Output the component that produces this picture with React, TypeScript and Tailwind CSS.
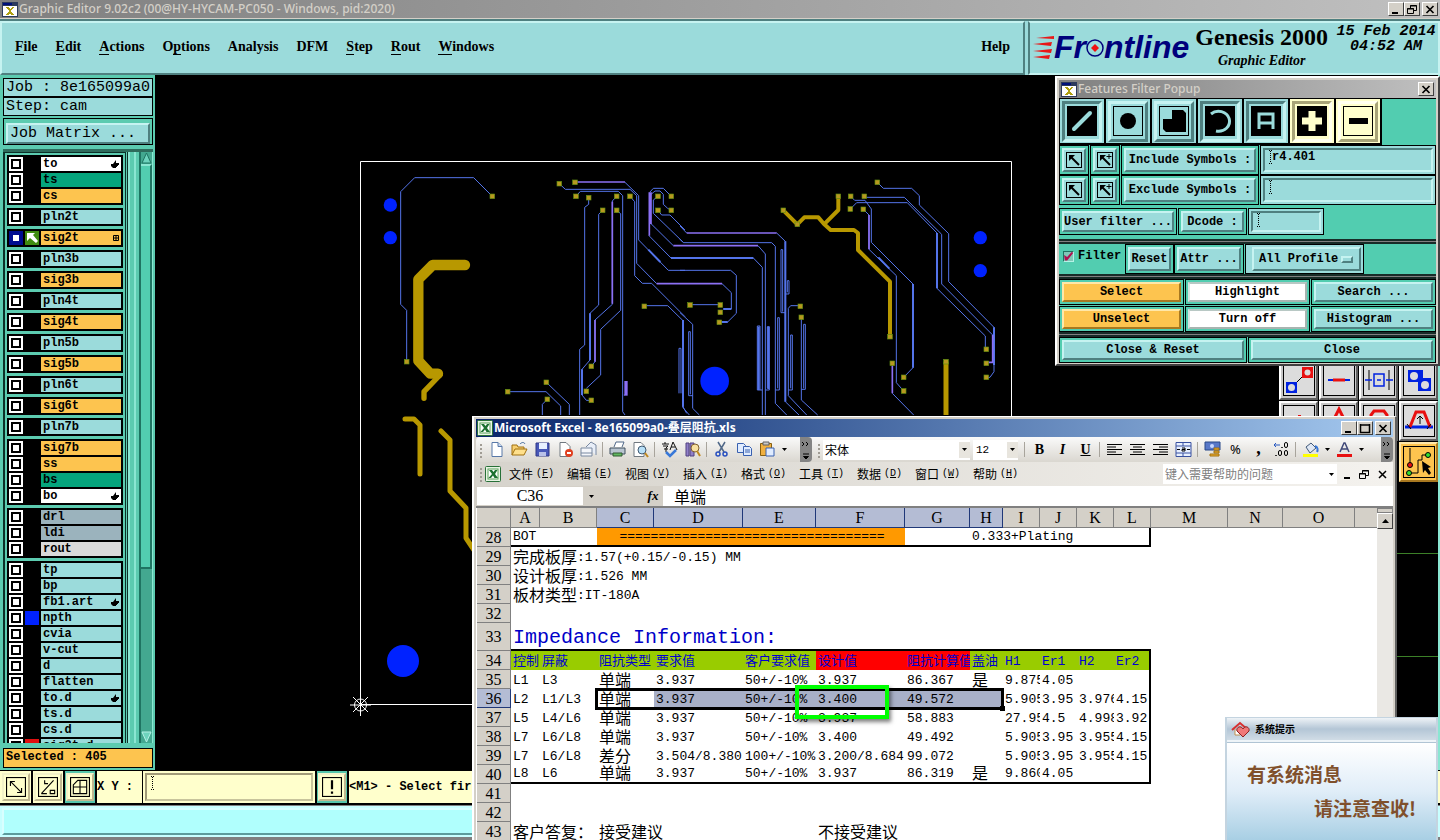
import React from 'react';

const MONO = 'font-["Liberation_Mono","Noto_Sans_CJK_SC",monospace]';
const SERIF = 'font-["Liberation_Serif","Noto_Sans_CJK_SC",serif]';
const SANS = 'font-["Noto_Sans","Noto_Sans_CJK_SC",sans-serif]';
const CJK = 'font-["Noto_Sans_CJK_SC",sans-serif]';

// bevel helpers shared by all the Motif style widgets
const RAISED = 'border-2 border-t-[#c6f3f1] border-l-[#c6f3f1] border-b-[#4f8080] border-r-[#4f8080] bg-[#9bdbdb]';
const SUNKEN = 'border-2 border-t-[#4f8080] border-l-[#4f8080] border-b-[#c6f3f1] border-r-[#c6f3f1] bg-[#9bdbdb]';
const GOLD = 'border-2 border-t-[#ffe7a8] border-l-[#ffe7a8] border-b-[#a87820] border-r-[#a87820] bg-[#fdc44f]';
const WHITE = 'border-2 border-t-[#b8c8c4] border-l-[#d8e4e0] border-b-[#a8b4b0] border-r-[#a8b4b0] bg-white';

const menus = [
  { label: 'File', key: 0 },
  { label: 'Edit', key: 0 },
  { label: 'Actions', key: 0 },
  { label: 'Options', key: 1 },
  { label: 'Analysis', key: -1 },
  { label: 'DFM', key: -1 },
  { label: 'Step', key: 0 },
  { label: 'Rout', key: 0 },
  { label: 'Windows', key: 0 },
];

type Layer = { name: string; bg: string; hand?: boolean; swatch?: string; active?: boolean };

const AQUA = 'bg-[#9bdbdb]';
const AMBER = 'bg-[#fdc44f]';
const GREEN = 'bg-[#05a57d]';

const layerGroups: Layer[][] = [
  [
    { name: 'to', bg: 'bg-white', hand: true },
    { name: 'ts', bg: GREEN },
    { name: 'cs', bg: AMBER },
  ],
  [{ name: 'pln2t', bg: AQUA }],
  [{ name: 'sig2t', bg: AMBER, active: true }],
  [{ name: 'pln3b', bg: AQUA }],
  [{ name: 'sig3b', bg: AMBER }],
  [{ name: 'pln4t', bg: AQUA }],
  [{ name: 'sig4t', bg: AMBER }],
  [{ name: 'pln5b', bg: AQUA }],
  [{ name: 'sig5b', bg: AMBER }],
  [{ name: 'pln6t', bg: AQUA }],
  [{ name: 'sig6t', bg: AMBER }],
  [{ name: 'pln7b', bg: AQUA }],
  [
    { name: 'sig7b', bg: AMBER },
    { name: 'ss', bg: AMBER },
    { name: 'bs', bg: GREEN },
    { name: 'bo', bg: 'bg-white', hand: true },
  ],
  [
    { name: 'drl', bg: 'bg-[#9bb3bd]' },
    { name: 'ldi', bg: 'bg-[#9bb3bd]' },
    { name: 'rout', bg: 'bg-[#dadada]' },
  ],
  [
    { name: 'tp', bg: AQUA },
    { name: 'bp', bg: AQUA },
    { name: 'fb1.art', bg: AQUA, hand: true },
    { name: 'npth', bg: AQUA, swatch: 'bg-[#0022ff]' },
    { name: 'cvia', bg: AQUA },
    { name: 'v-cut', bg: AQUA },
    { name: 'd', bg: AQUA },
    { name: 'flatten', bg: AQUA },
    { name: 'to.d', bg: AQUA, hand: true },
    { name: 'ts.d', bg: AQUA },
    { name: 'cs.d', bg: AQUA },
    { name: 'sig2t.d', bg: AQUA, swatch: 'bg-[#e01010]' },
  ],
];

function AppIcon() {
  return (
    <svg className="shrink-0" width="16" height="15" viewBox="0 0 16 15" shapeRendering="crispEdges">
      <rect x="0" y="0" width="16" height="15" fill="#2c3a5c" />
      <rect x="1" y="1" width="9" height="2" fill="#00107c" />
      <rect x="1" y="4" width="14" height="10" fill="#fff" />
      <path d="M4 5h3l1 2 2-2h2l-3 4 3 4h-3l-1-2-2 2H4l3-4z" fill="#b0a010" />
    </svg>
  );
}

function WinButton({ kind }: { kind: 'min' | 'max' | 'restore' | 'close' }) {
  return (
    <button
      aria-label={kind}
      className="flex h-[14px] w-4 items-center justify-center border border-t-white border-l-white border-b-[#404040] border-r-[#404040] bg-[#d4d0c8]"
    >
      <svg width="12" height="11" viewBox="0 0 12 11" fill="none" stroke="#000">
        {kind === 'min' && <path d="M2 9h6" strokeWidth="2" />}
        {kind === 'max' && <path d="M1.5 1v8.500h9V1M1 2h10" strokeWidth="1.500" />}
        {kind === 'restore' && <path d="M4.500 4V1.500h6v5H8M4 2h7M1.500 4.500h6v5h-6zM1 5h7" />}
        {kind === 'close' && <path d="M2.500 2l7 7M9.500 2l-7 7" strokeWidth="1.700" />}
      </svg>
    </button>
  );
}

// the dotted text cursor that every Motif entry shows
function IBeam() {
  return (
    <svg className="shrink-0" width="3" height="14" viewBox="0 0 3 14" fill="none" stroke="#000">
      <path d="M1.500 1v12" strokeDasharray="1 1" />
      <path d="M0 .5h1M2 .5h1M0 13.500h1M2 13.500h1" />
    </svg>
  );
}

function TitleBar() {
  return (
    <header className="flex h-[19px] shrink-0 items-center gap-px border-b border-[#d4d0c8] bg-linear-to-r from-[#808080] to-[#c0c0c0] pr-[2px] pl-[2px]">
      <AppIcon />
      <h1 className={`${SANS} flex-1 text-[12px] leading-4 font-medium whitespace-nowrap text-[#d4d0c8]`}>
        Graphic Editor 9.02c2 (00@HY-HYCAM-PC050 - Windows, pid:2020)
      </h1>
      <div className="flex">
        <WinButton kind="min" />
        <WinButton kind="restore" />
        <span className="w-[2px]" />
        <WinButton kind="close" />
      </div>
    </header>
  );
}

function MenuBar() {
  return (
    <div className={`${SERIF} flex h-14 shrink-0 border-t-2 border-[#4f8080] bg-[#9bdbdb] text-black`}>
      <nav className="flex flex-1 items-center justify-between border-2 border-t-[#c6f3f1] border-l-[#c6f3f1] border-b-[#4f8080] border-r-[#4f8080] px-[13px] pb-[2px] text-[14px] leading-4 font-bold">
        <div className="flex gap-[18px]">
          {menus.map((m) => (
            <button key={m.label}>
              {m.key < 0 ? (
                m.label
              ) : (
                <>
                  {m.label.slice(0, m.key)}
                  <span className="border-b border-black">{m.label[m.key]}</span>
                  {m.label.slice(m.key + 1)}
                </>
              )}
            </button>
          ))}
        </div>
        <button>Help</button>
      </nav>
      <div className="ml-[3px] flex w-[412px] gap-[6px] border-2 border-t-[#c6f3f1] border-l-[#4f8080] border-b-[#c6f3f1] border-r-[#c6f3f1] pl-[2px]">
        <div className='flex items-center pb-[2px] font-["Liberation_Sans",sans-serif] text-[32px] leading-8 font-bold text-[#00007c] italic'>
          <svg className="shrink-0" width="22" height="26" viewBox="0 0 22 26" fill="#e81818">
            <path d="M4 4l18-2v3zM1 10l19-2-1 4zM1 17l19-2-1 4zM1 23l17-2-1 4z" />
          </svg>
          Fr
          <svg className="shrink-0" width="18" height="20" viewBox="0 0 18 20">
            <circle cx="9" cy="11" r="8" fill="none" stroke="#00007c" strokeWidth="1.500" />
            <path d="M9 7l4 4-4 4-4-4z" fill="#f01010" />
          </svg>
          ntline
        </div>
        <div className="flex flex-col items-center">
          <span className="text-[24px] leading-7 font-bold whitespace-nowrap">Genesis 2000</span>
          <span className="text-[14px] leading-5 font-bold italic">Graphic Editor</span>
        </div>
        <time className={`${MONO} flex flex-1 flex-col items-center pt-px text-[15px] leading-[15px] font-bold whitespace-nowrap italic`}>
          <span>15 Feb 2014</span>
          <span>04:52 AM</span>
        </time>
      </div>
    </div>
  );
}

function LayerRow({ layer }: { layer: Layer }) {
  return (
    <li className="flex h-4 items-center gap-[2px] px-[2px]">
      <span className={`flex size-[14px] items-center justify-center ${layer.active ? 'bg-[#000c90]' : 'bg-white'}`}>
        <input
          type="checkbox"
          aria-label={layer.name}
          className={`size-[10px] appearance-none border-2 bg-white ${layer.active ? 'border-[#000c90]' : 'border-black'}`}
        />
      </span>
      <span className={`size-[14px] ${layer.active ? 'bg-[#408c10]' : layer.swatch || 'bg-black'}`}>
        {layer.active && (
          <svg width="14" height="14" viewBox="0 0 14 14">
            <path d="M2 2h8L8 4l5 6-2 2-6-5-3 3z" fill="#fff" />
          </svg>
        )}
      </span>
      <span className={`flex h-[14px] flex-1 items-center justify-between pr-[2px] pl-[2px] text-[12px] leading-[14px] font-bold ${layer.bg}`}>
        {layer.name}
        {layer.hand && (
          <svg width="8" height="8" viewBox="0 0 8 8">
            <path d="M0 4h2l3-4v3h3v2H7v1H6v1H5v1H2L0 6z" fill="#000" />
          </svg>
        )}
        {layer.active && (
          <svg width="6" height="6" viewBox="0 0 6 6" fill="none" stroke="#000">
            <path d="M.5.5h5v5h-5zM3 0v6M0 3h6" />
          </svg>
        )}
      </span>
    </li>
  );
}

function Sidebar() {
  return (
    <aside className={`${MONO} flex w-[155px] shrink-0 flex-col bg-[#5ccbb0] pt-[3px] pr-[2px] pb-[2px] pl-[3px] text-black`}>
      <div className="h-[19px] border border-black bg-[#9bdbdb] pl-[2px] text-[15px] leading-[17px] whitespace-nowrap">
        Job : 8e165099a0
      </div>
      <div className="h-[19px] border border-black bg-[#9bdbdb] pl-[2px] text-[15px] leading-[17px]">Step: cam</div>
      <div className="mt-[2px] h-[27px] border border-black p-[2px]">
        <button className={`${RAISED} w-full pl-[2px] text-left text-[15px] leading-[17px]`}>Job Matrix ...</button>
      </div>
      <div className="mt-1 flex min-h-0 flex-1 border-t-[3px] border-[#2e6b5c]">
        <div className="min-h-0 flex-1 overflow-hidden border-t border-l-2 border-[#0c3028] pt-[2px] pl-[2px]">
          <ul className="mr-[2px] flex flex-col gap-[3px]">
            {layerGroups.map((group) => (
              <li key={group[0].name} className="bg-black py-px">
                <ul>
                  {group.map((layer) => (
                    <LayerRow key={layer.name} layer={layer} />
                  ))}
                </ul>
              </li>
            ))}
          </ul>
        </div>
        <div className="w-[3px] border-r border-l border-[#0c3028]" />
        <div className="w-2 border-x-2 border-[#8be6d2]" />
        <div className="ml-[3px] flex w-[14px] flex-col border-r border-l-2 border-l-[#1f7462] border-r-[#8be6d2] bg-[#43a890]">
          <svg className="shrink-0" width="11" height="12" viewBox="0 0 11 12">
            <path d="M5.500 1L10 11H1z" fill="#6dd3bd" stroke="#1f7462" />
          </svg>
          <div className="h-[405px] border-t-2 border-r-2 border-b-2 border-t-[#8be6d2] border-r-[#1f7462] border-b-[#1f7462] bg-[#52cdb0]" />
          <div className="flex-1" />
          <svg className="shrink-0" width="11" height="12" viewBox="0 0 11 12">
            <path d="M5.500 11L10 1H1z" fill="#6dd3bd" stroke="#b4f2e6" />
          </svg>
        </div>
      </div>
      <div className="mt-[5px] h-5 border border-black bg-[#fdc44f] pl-[2px] text-[12px] leading-[17px] font-bold">Selected : 405</div>
    </aside>
  );
}

// pad centres, in the units of the group they are drawn in
const leftPads = [
  [412, 124], [155, 620], [613, 86], [660, 82], [663, 124], [701, 128], [743, 166], [785, 124], [785, 166],
  [825, 124], [909, 124], [949, 124], [909, 166], [949, 166], [868, 454], [709, 634], [694, 709], [709, 736],
  [458, 710], [574, 682], [577, 733],
];
const rightPads = [
  [310, 166], [352, 208], [475, 124], [512, 124], [553, 124], [511, 162], [550, 163], [592, 82], [361, 454],
  [364, 487], [630, 545], [637, 625], [671, 667], [671, 708], [798, 620], [919, 583], [919, 625], [919, 667],
  [30, 450], [121, 450], [121, 472], [118, 502],
];

function Pads({ points }: { points: number[][] }) {
  return (
    <g stroke="#5c8c10" strokeWidth="2">
      {points.map(([x, y]) => (
        <rect key={`${x}-${y}`} x={x - 7} y={y - 7} width="14" height="14" fill="#b89820" />
      ))}
    </g>
  );
}

function BoardCanvas() {
  return (
    <main className="min-w-0 flex-1 overflow-hidden bg-black">
      <svg width="1124" height="695" viewBox="155 75 1124 695" fill="none">
        <path d="M360.500 161.500H1011.500V704.500H360.500z" stroke="#fff" />
        <circle cx="403" cy="661" r="16" fill="#0022ff" />
        <g stroke="#fff">
          <circle cx="360.500" cy="705" r="6" />
          <path d="M350 705h21M360.500 694v22M353 697l15 15M368 697l-15 15" />
        </g>
        <g stroke="#b89800" strokeWidth="5" strokeLinecap="round" strokeLinejoin="round">
          <path d="M405 419h9l6 6v49" />
          <path d="M441 431l9 9v51l16 17v30l8 12" />
        </g>
        <g transform="translate(355 155) scale(.33333)">
          <g fill="#0022ff">
            <circle cx="106" cy="150" r="20" />
            <circle cx="106" cy="248" r="20" />
          </g>
          <g stroke="#b89800" strokeLinecap="round" strokeLinejoin="round">
            <path d="M330 330H233L190 373V617L226 656H249" strokeWidth="31" />
            <path d="M255 660L207 710V730" strokeWidth="16" />
          </g>
          <g stroke="#5474ea" strokeWidth="3">
            <path d="M412 124L356 68H179L137 110V448L155 466V620" />
            <path d="M613 86L631 103H825L845 122V325L905 386" />
            <path d="M810 82L851 122V255L940 346H990" />
            <path d="M663 124L676 109H790L803 122V770L810 780" />
            <path d="M701 128V148L689 157V570L674 583V780" />
            <path d="M743 166L731 178V450L705 475V615L681 643V720L694 736H709" />
            <path d="M785 124L772 138V448L720 495V620L709 634" />
            <path d="M785 166L797 176V466L737 523V660L694 700" />
            <path d="M825 124L839 140V362L862 385H890L990 485" />
            <path d="M868 452H938L984 497V755L995 775" />
            <path d="M458 710H573L617 753V780M574 682L643 748V780M577 733L562 748V780" />
            <path d="M882 242L948 309H990M884 112L895 100H925L949 124M887 205L955 272M909 124L895 135V175L985 262" />
            <path d="M909 166L920 180H945L990 225M949 166L938 160L925 148V118L915 108H900L886 120" />
            <path d="M972 715V580H978V715M808 722V718" />
            <path d="M705 475V615M681 643V720M984 497V755M948 309H975M880 284L916 321" strokeWidth="6" />
          </g>
          <g stroke="#8c70f4" strokeWidth="5">
            <path d="M660 81H810M905 386H975M955 272H975M772 140V446M720 495V620M883 112V242M888 112V207" />
            <path d="M813 678V722" strokeWidth="10" />
          </g>
          <Pads points={leftPads} />
        </g>
        <g transform="translate(680 155) scale(.33333)">
          <g fill="#0022ff">
            <circle cx="104" cy="678" r="43" />
            <circle cx="901" cy="248" r="20" />
            <circle cx="901" cy="347" r="20" />
          </g>
          <g stroke="#b89800" strokeWidth="12" strokeLinejoin="round">
            <path d="M310 166L352 208L373 187H415L432 207L452 225H522L534 234V285L630 380V545" />
            <path d="M475 124V165L432 208" />
            <path d="M798 620V780" strokeWidth="15" />
          </g>
          <g stroke="#5474ea" strokeWidth="3">
            <path d="M0 213L20 234M290 234L316 259V740L357 780" />
            <path d="M0 253L10 263H275L286 274V745L320 780" />
            <path d="M234 272L256 297V780M0 309H220L247 337V780" />
            <path d="M0 346H152L169 361V475L143 501H118M126 386L154 413V462H130M30 449H121" />
            <path d="M247 705H232V513H240V705M256 705H268V515H262V700M286 705H298V488H293V700" />
            <path d="M316 473H303V284H308V470M316 417H327V377H322V412" />
            <path d="M361 452H332L325 460V722L380 780M325 705H337V540H332V700" />
            <path d="M364 487V735L413 780M364 703H376V508H371V700" />
            <path d="M0 473L38 508V760L58 780M38 722H26V530H31V718M9 495V758L28 780" />
            <path d="M592 82L610 100H695L718 122V150L806 236V380L942 517V650L930 667H919" />
            <path d="M553 127H673L785 238V387L938 540" />
            <path d="M511 162L530 143H682L771 234V400L916 543V583" />
            <path d="M512 124L524 136H555L574 162V262L699 387V638L671 667" />
            <path d="M550 163L567 180V283L649 362V683L671 708" />
            <path d="M637 715L701 780" />
            <path d="M316 259V740M9 495V720M699 387V638M771 234V400M0 309H220M595 307L628 341M118 501H143M130 462H154M236 515V705M265 515V702M942 517V630" strokeWidth="6" />
          </g>
          <g stroke="#8c70f4" strokeWidth="5">
            <path d="M20 234H290M0 272H234M0 386H126M567 180V283M637 625V715M938 540V622H919" />
          </g>
          <Pads points={rightPads} />
        </g>
      </svg>
    </main>
  );
}

function ToolTile({ children, active, label }: { children?: React.ReactNode; active?: boolean; label: string }) {
  return (
    <button
      aria-label={label}
      className={`flex h-10 items-center justify-center border-2 ${
        active
          ? 'border-t-[#ffe7a8] border-l-[#ffe7a8] border-b-[#a87820] border-r-[#a87820] bg-[#fdc44f]'
          : 'border-t-white border-l-white border-b-[#606060] border-r-[#606060] bg-[#c8c8c8]'
      }`}
    >
      <svg width="32" height="32" viewBox="0 0 32 32" fill="none">
        <rect x=".5" y=".5" width="31" height="31" stroke="#000" fill={active ? '#fdc44f' : '#dcdcdc'} />
        {children}
      </svg>
    </button>
  );
}

function ToolStrip() {
  return (
    <aside className="flex w-[161px] shrink-0 flex-col border-r-2 border-[#8be6d2] bg-black">
      <div className="h-[285px]" />
      <div className="grid grid-cols-4 gap-px bg-black">
        <ToolTile label="Move">
          <path d="M8 24L24 8" stroke="#000" />
          <rect x="19" y="3" width="11" height="11" fill="#e81010" />
          <circle cx="24.500" cy="8.500" r="3" fill="#dcdcdc" />
          <rect x="3" y="18" width="11" height="11" fill="#0022e0" />
          <circle cx="8.500" cy="23.500" r="3.500" fill="#dcdcdc" />
        </ToolTile>
        <ToolTile label="Line">
          <path d="M5 16h22" stroke="#0022e0" strokeWidth="2" />
          <path d="M10 16h12" stroke="#e81010" strokeWidth="3" />
        </ToolTile>
        <ToolTile label="Spacing">
          <path d="M6 6v20M26 6v20" stroke="#000" />
          <path d="M11 10h10v12H11zM2 16h7M23 16h7M14 16h4" stroke="#0022e0" strokeWidth="1.500" />
        </ToolTile>
        <ToolTile label="Combine">
          <path d="M5 6h15v12H5zM15 14h13v13H15z" fill="#0022e0" />
          <circle cx="11" cy="12" r="4" fill="#dcdcdc" />
          <circle cx="22" cy="21" r="4" fill="#dcdcdc" />
        </ToolTile>
        <ToolTile label="Point">
          <path d="M4 20h24" stroke="#0022e0" />
          <path d="M15 11h3" stroke="#e81010" strokeWidth="2" />
        </ToolTile>
        <ToolTile label="Peak">
          <path d="M8 20l8-16 8 16" stroke="#e81010" strokeWidth="3" />
        </ToolTile>
        <ToolTile label="Arc">
          <path d="M8 20V10l3-4h10l3 4v10" stroke="#e81010" strokeWidth="3" />
        </ToolTile>
        <ToolTile label="Stretch">
          <path d="M2 22h28" stroke="#0022e0" strokeWidth="3" />
          <path d="M7 22l6-15h8l6 15" stroke="#e81010" strokeWidth="3" />
          <path d="M17 19v-8M14 14l3-3 3 3M4 19l4 5M28 19l-4 5" stroke="#000" />
        </ToolTile>
        <span />
        <span />
        <span />
        <ToolTile label="Route" active>
          <path d="M7 2v17M7 27h8V14h4V9h6" stroke="#000" />
          <circle cx="7" cy="19" r="2.500" fill="#e81010" stroke="#000" />
          <circle cx="6" cy="27" r="2.500" fill="#30e030" stroke="#000" />
          <circle cx="25" cy="9" r="2.500" fill="#30e030" stroke="#000" />
          <path d="M19 15l9 6-3 1 3 5-2 2-4-5-2 3z" fill="#000" />
        </ToolTile>
      </div>
      <div className="h-[72px] border-b border-[#3c8028]" />
      <div className="h-[103px] border-b border-[#3c8028]" />
    </aside>
  );
}

function CreamTile({ children, label, teal }: { children: React.ReactNode; label: string; teal?: boolean }) {
  return (
    <button
      aria-label={label}
      className={`flex h-full w-8 items-center justify-center border-r-2 border-black ${teal ? 'bg-[#55c5ab]' : 'bg-[#ffffcc]'}`}
    >
      <span className="flex size-7 shrink-0 items-center justify-center border-2 border-t-[#f2f2c8] border-l-[#f2f2c8] border-b-[#c0b890] border-r-[#c0b890] bg-[#ffffcc]">
        <svg className="shrink-0" width="20" height="20" viewBox="0 0 18 18" fill="none" stroke="#000">
          <rect x=".5" y=".5" width="17" height="17" />
          {children}
        </svg>
      </span>
    </button>
  );
}

function StatusArea() {
  return (
    <footer className={`${MONO} flex h-[70px] shrink-0 flex-col bg-black pt-px text-[12px] font-bold text-black`}>
      <div className="flex h-8 bg-[#ffffcc] pl-px">
        <CreamTile label="Snap">
          <path d="M4 8V4h4M4 4l10 10M10 14h4v-4" />
        </CreamTile>
        <CreamTile label="Angle">
          <path d="M3 15L14 3M3 15h5M6 3v3h3M11 12h4v3h-4z" />
        </CreamTile>
        <CreamTile label="Grid" teal>
          <path d="M3 7l4-4h8v12H3zM9 3v12M3 9h12" />
        </CreamTile>
        <label htmlFor="xy" className="w-[46px] border-r border-black leading-8">
          X Y :
        </label>
        <div className="my-[2px] ml-[2px] flex w-[168px] border-2 border-t-[#a09a78] border-l-[#a09a78] border-b-[#c8c49c] border-r-[#c8c49c] pt-px pl-1">
          <IBeam />
          <input id="xy" className="min-w-0 flex-1 bg-transparent" />
        </div>
        <span className="ml-[2px] flex border-l-2 border-black">
          <CreamTile label="Message" teal>
            <path d="M9 3v8M9 13v2" strokeWidth="2" />
          </CreamTile>
        </span>
        <span className="flex-1 leading-8">&lt;M1&gt; - Select fir</span>
      </div>
      <div className="mt-[2px] flex-1 border-t border-b-[3px] border-[#808080] bg-[#c8ffff] p-[2px]">
        <div className="h-full border-2 border-t-[#d8ffff] border-l-[#d8ffff] border-b-[#5c9c9c] border-r-[#5c9c9c] bg-[#b0fffd]" />
      </div>
    </footer>
  );
}

function FilterTile({ children, label, pressed, cream }: { children: React.ReactNode; label: string; pressed?: boolean; cream?: boolean }) {
  const up = cream ? 'border-t-[#fffff0] border-l-[#fffff0] border-b-[#a8a478] border-r-[#a8a478] bg-[#ffffcc]' : 'border-t-[#c6f3f1] border-l-[#c6f3f1] border-b-[#4f8080] border-r-[#4f8080] bg-[#9bdbdb]';
  const down = cream ? 'border-t-[#a8a478] border-l-[#a8a478] border-b-[#fffff0] border-r-[#fffff0] bg-[#ffffcc]' : 'border-t-[#4f8080] border-l-[#4f8080] border-b-[#c6f3f1] border-r-[#c6f3f1] bg-[#9bdbdb]';
  const fg = cream ? '#ffffcc' : '#9bdbdb';
  return (
    <button
      aria-label={label}
      className={`flex h-[46px] w-[46px] items-center justify-center border-r-2 border-b-2 border-black p-[2px] ${cream ? 'bg-[#ffffcc]' : 'bg-[#9bdbdb]'}`}
    >
      <span className={`flex size-[41px] items-center justify-center border-[3px] ${pressed ? down : up}`}>
        <svg className="shrink-0" width="30" height="30" viewBox="0 0 30 30" stroke={pressed ? fg : '#000'} fill="none">
          <rect x=".5" y=".5" width="29" height="29" fill={pressed ? '#000' : fg} stroke="#000" />
          {children}
        </svg>
      </span>
    </button>
  );
}

function PopupButton({ children, skin = RAISED, className = '' }: { children: React.ReactNode; skin?: string; className?: string }) {
  return (
    <div className={`flex border border-black p-[2px] ${className}`}>
      <button className={`flex-1 text-center whitespace-nowrap ${skin}`}>{children}</button>
    </div>
  );
}

function ArrowButton({ plus }: { plus?: boolean }) {
  return (
    <PopupButton className="w-[30px]">
      <svg className="m-auto" width="16" height="16" viewBox="0 0 16 16" fill="none" stroke="#000">
        <rect x=".5" y=".5" width="15" height="15" />
        <path d="M5 5l8 8" strokeWidth="2" />
        <path d="M3 3h6L3 9z" fill="#000" stroke="none" />
        {plus && <path d="M12 2v5M9.500 4.500h5" />}
      </svg>
    </PopupButton>
  );
}

function PopupField({ label, value, className }: { label: string; value?: string; className: string }) {
  return (
    <div className={`flex border border-black bg-[#9bdbdb] p-[2px] ${className}`}>
      <div className={`${SUNKEN} flex min-w-0 flex-1 items-start pl-1`}>
        <IBeam />
        <input aria-label={label} defaultValue={value} className="h-[14px] min-w-0 flex-1 bg-transparent leading-[14px]" />
      </div>
    </div>
  );
}

function Divider() {
  return <div className="h-[5px] shrink-0 border-y-2 border-[#182c28] bg-[#808080]" />;
}

function FilterPopup() {
  return (
    <section className={`${MONO} absolute top-[76px] right-0 w-[385px] border-2 border-t-white border-l-white border-b-[#404040] border-r-[#404040] bg-[#d4d0c8] p-[2px] text-[12px] leading-4 font-bold text-black`}>
      <header className="flex h-[18px] items-center gap-px bg-linear-to-r from-[#808080] to-[#c0c0c0] pr-[2px] pl-[2px]">
        <AppIcon />
        <h2 className={`${SANS} flex-1 text-[12px] font-medium text-[#d4d0c8]`}>Features Filter Popup</h2>
        <WinButton kind="close" />
      </header>
      <div className="flex flex-col bg-[#52cdb0]">
        <div className="flex border-t border-l border-black">
          <FilterTile label="Lines" pressed>
            <path d="M7 23L23 7" strokeWidth="4" strokeLinecap="round" />
          </FilterTile>
          <FilterTile label="Pads">
            <circle cx="15" cy="15" r="8" fill="#000" stroke="none" />
          </FilterTile>
          <FilterTile label="Surfaces">
            <path d="M13 4h11l3 3v19H7l-3-3V13h9z" fill="#000" stroke="none" />
          </FilterTile>
          <FilterTile label="Arcs" pressed>
            <path d="M6 8a11 10 0 1 1 5 17" strokeWidth="3" />
          </FilterTile>
          <FilterTile label="Text" pressed>
            <path d="M8 23V8h14v15M8 17h14" strokeWidth="3" />
          </FilterTile>
          <FilterTile label="Positive" pressed cream>
            <path d="M15 5v20M5 15h20" strokeWidth="7" />
          </FilterTile>
          <FilterTile label="Negative" cream>
            <path d="M6 15h19" strokeWidth="6" />
          </FilterTile>
        </div>
        <div className="flex h-[30px] gap-px">
          <ArrowButton />
          <ArrowButton plus />
          <PopupButton className="w-[138px]">Include Symbols :</PopupButton>
          <PopupField label="Include symbols" value="r4.401" className="flex-1" />
        </div>
        <div className="flex h-[30px] gap-px">
          <ArrowButton />
          <ArrowButton plus />
          <PopupButton className="w-[138px]">Exclude Symbols :</PopupButton>
          <PopupField label="Exclude symbols" className="flex-1" />
        </div>
        <div className="mt-[3px] mb-1 flex h-[27px] gap-px">
          <PopupButton className="w-[118px]">User filter ...</PopupButton>
          <PopupButton className="w-[69px]">Dcode :</PopupButton>
          <PopupField label="Dcode" className="w-[76px]" />
        </div>
        <Divider />
        <div className="flex h-[30px]">
          <label className="flex h-6 w-[66px] items-center gap-1 pl-1">
            <span className="flex size-[11px] shrink-0 items-center justify-center border border-t-[#1f7462] border-l-[#1f7462] border-b-[#b4f2e6] border-r-[#b4f2e6] bg-[#80c8b8]">
              <input type="checkbox" defaultChecked className='size-[9px] appearance-none checked:bg-[#b01050] checked:[clip-path:polygon(0_40%,35%_60%,90%_0,100%_20%,35%_100%,10%_100%)]' />
            </span>
            Filter
          </label>
          <PopupButton className="w-[49px]">Reset</PopupButton>
          <PopupButton className="w-[70px]">Attr ...</PopupButton>
          <div className="ml-px flex w-[119px] border border-black bg-[#9bdbdb] py-[2px] pr-[2px] pl-[6px]">
            <div className={`${RAISED} flex flex-1 items-center pr-[6px] pl-[5px]`}>
              <select aria-label="Profile" className="flex-1 appearance-none bg-transparent font-bold">
                <option>All Profile</option>
              </select>
              <span className={`${RAISED} h-[7px] w-3 shrink-0`} />
            </div>
          </div>
        </div>
        <Divider />
        <div className="grid h-[53px] grid-cols-3 grid-rows-2 gap-px">
          <PopupButton skin={GOLD}>Select</PopupButton>
          <PopupButton skin={WHITE}>Highlight</PopupButton>
          <PopupButton>Search ...</PopupButton>
          <PopupButton skin={GOLD}>Unselect</PopupButton>
          <PopupButton skin={WHITE}>Turn off</PopupButton>
          <PopupButton>Histogram ...</PopupButton>
        </div>
        <Divider />
        <div className="grid h-[25px] grid-cols-2 gap-px">
          <PopupButton>Close &amp; Reset</PopupButton>
          <PopupButton>Close</PopupButton>
        </div>
      </div>
    </section>
  );
}

/* ---------- Excel ---------- */

function XlIcon({ children, label }: { children: React.ReactNode; label: string }) {
  return (
    <button aria-label={label} className="flex w-[23px] shrink-0 items-center justify-center">
      <svg width="17" height="17" viewBox="0 0 17 17" fill="none">
        {children}
      </svg>
    </button>
  );
}

function Sep() {
  return <span className="mr-[3px] ml-[2px] h-[15px] w-px shrink-0 bg-[#a8a49c]" />;
}

function Grip() {
  return (
    <svg className="mx-px shrink-0" width="5" height="16" viewBox="0 0 5 16" fill="#a09c94">
      <path d="M1 2h2v2H1zM1 6h2v2H1zM1 10h2v2H1zM1 14h2v2H1z" />
    </svg>
  );
}

function Caret() {
  return (
    <svg className="shrink-0" width="11" height="5" viewBox="0 0 11 5">
      <path d="M3 1h5L5.500 4z" fill="#000" />
    </svg>
  );
}

function Overflow() {
  return (
    <span className="flex h-full w-3 shrink-0 items-center rounded-r bg-[#848484]">
      <svg width="12" height="22" viewBox="0 0 12 22" fill="none" stroke="#000">
        <path d="M2 3l2 2-2 2M6 3l2 2-2 2M3 15h6" />
        <path d="M3.500 17.500h5L6 20z" fill="#000" />
      </svg>
    </span>
  );
}

function ExcelToolbar() {
  const lines = (offsets: number[]) => offsets.map((x, i) => `M${x} ${3.5 + i * 2.5}h${i % 2 ? 9 : 15}`).join('');
  return (
    <div className="flex h-[25px] items-center rounded bg-linear-to-b from-[#fafafa] to-[#dad7d0] pl-[2px]">
      <Grip />
      <XlIcon label="New"><path d="M4 1.500h6l4 4V15.500H4z" fill="#fff" stroke="#5878a8" /><path d="M10 1.500v4h4" fill="#c8d8f0" stroke="#5878a8" /></XlIcon>
      <XlIcon label="Open"><path d="M1 14V4h5l1 2h6v3" fill="#f8d070" stroke="#a07010" /><path d="M1 14l3-6h12l-3 6z" fill="#ffe08c" stroke="#a07010" /><path d="M9 3c2-2 4-2 5 0" stroke="#406898" /></XlIcon>
      <XlIcon label="Save"><path d="M2 2h13v13H2z" fill="#4858b8" stroke="#303888" /><path d="M5 2h8v6H5z" fill="#e8f0ff" /><path d="M5 11h7v4H5z" fill="#b8c0e8" /></XlIcon>
      <XlIcon label="Permission"><path d="M3 1.500h6l4 4V15.500H3z" fill="#fff" stroke="#707880" /><circle cx="12" cy="12" r="4" fill="#e04020" /><path d="M10 12h4" stroke="#fff" strokeWidth="2" /></XlIcon>
      <XlIcon label="Mail"><path d="M6 6l5-5 5 3v10" fill="#e8eef8" stroke="#7888a0" /><path d="M1 7h11v8H1z" fill="#f4f6fa" stroke="#7888a0" /><path d="M1 12h11" stroke="#7888a0" /></XlIcon>
      <Sep />
      <XlIcon label="Print"><path d="M5 6l2-5h8l-2 5" fill="#fff" stroke="#506888" /><path d="M1 7h15v6H1z" fill="#b8c4d0" stroke="#405060" /><path d="M4 12h9v3H4z" fill="#60b860" stroke="#305830" /></XlIcon>
      <XlIcon label="Preview"><path d="M2 1.500h7l3 3V15.500H2z" fill="#fff" stroke="#707880" /><circle cx="10" cy="9" r="4" fill="#b8e0f8" stroke="#405870" /><path d="M13 12l3 4" stroke="#c08820" strokeWidth="2" /></XlIcon>
      <Sep />
      <XlIcon label="Spelling"><path d="M1 3h7M4 1v2M2 5h5l-2 2v4M3 8h4M9 9l3-8 4 8M10 6h4" stroke="#101010" /><path d="M5 11l4 4 6-6" stroke="#3878d8" strokeWidth="2.500" /></XlIcon>
      <XlIcon label="Research"><path d="M2 2h3v13H2zM6 2h4v13H6z" fill="#9080c8" stroke="#504080" /><circle cx="11" cy="7" r="4" fill="#f8e0a0" stroke="#806030" /><path d="M13 10l3 5" stroke="#c08820" strokeWidth="2" /></XlIcon>
      <Sep />
      <XlIcon label="Cut"><path d="M5 1l6 10M12 1L6 11" stroke="#506888" strokeWidth="1.500" /><circle cx="5" cy="13" r="2" stroke="#2850c0" strokeWidth="1.500" /><circle cx="12" cy="13" r="2" stroke="#2850c0" strokeWidth="1.500" /></XlIcon>
      <XlIcon label="Copy"><path d="M1.500 2.500h6l2 2v7h-8z" fill="#e0ecff" stroke="#3860b0" /><path d="M7.500 5.500h6l2 2v7h-8z" fill="#e0ecff" stroke="#3860b0" /><path d="M9 9h5M9 11h5" stroke="#3860b0" /></XlIcon>
      <XlIcon label="Paste"><path d="M1.500 2.500h11v12h-11z" fill="#f0b040" stroke="#886010" /><path d="M4 1h6v3H4z" fill="#c8c8c8" stroke="#606060" /><path d="M7 7h8v8H7z" fill="#e0ecff" stroke="#3860b0" /></XlIcon>
      <Caret />
      <span className="w-[10px] shrink-0" />
      <Overflow />
      <span className="ml-1"><Grip /></span>
      <div className={`${CJK} flex h-5 flex-1 items-center bg-white text-[12px] leading-5 text-black`}>
        <select aria-label="Font" className="min-w-0 flex-1 appearance-none bg-white pl-[2px]">
          <option>宋体</option>
        </select>
        <span className="flex h-4 items-center bg-[#e8e5de]"><Caret /></span>
      </div>
      <div className={`${MONO} ml-[3px] flex h-5 w-[45px] items-center bg-white text-[11px] leading-5 text-black`}>
        <select aria-label="Font size" className="min-w-0 flex-1 appearance-none bg-white pl-[3px]">
          <option>12</option>
        </select>
        <span className="flex h-4 items-center bg-[#e8e5de]"><Caret /></span>
      </div>
      <span className="w-1 shrink-0" />
      <Sep />
      <button className={`${SERIF} w-[23px] shrink-0 text-[14px] font-bold`}>B</button>
      <button className={`${SERIF} w-[23px] shrink-0 text-[14px] font-bold italic`}>I</button>
      <button className={`${SERIF} w-[23px] shrink-0 text-[14px] font-bold underline`}>U</button>
      <Sep />
      <XlIcon label="Align left"><path d={lines([1, 1, 1, 1, 1])} stroke="#000" /></XlIcon>
      <XlIcon label="Center"><path d={lines([1, 4, 1, 4, 1])} stroke="#000" /></XlIcon>
      <XlIcon label="Align right"><path d={lines([1, 7, 1, 7, 1])} stroke="#000" /></XlIcon>
      <XlIcon label="Merge"><path d="M1 1.500h15v14H1zM1 5h15M1 12h15M8 1v4M8 12v4" fill="#e8f0ff" stroke="#3850a0" /><path d="M2 8.500h3M12 8.500h3M7 7h3v3H7v-1.500h3" stroke="#000" /></XlIcon>
      <Sep />
      <XlIcon label="Currency"><path d="M1 1h15v8H1z" fill="#5878c8" stroke="#284888" /><circle cx="8" cy="5" r="2" fill="#c8d8ff" /><path d="M10 7h5v2h-5zM10 10h5v2h-5zM6 13h9v2H6z" fill="#f0b030" stroke="#a07010" /></XlIcon>
      <button className="w-[23px] shrink-0 text-[13px]">%</button>
      <button className={`${SERIF} w-[23px] shrink-0 pb-1 text-[18px] leading-4 font-bold`}>,</button>
      <XlIcon label="Decimals"><path d="M1 4h6M3 2L1 4l2 2" stroke="#2858c0" /><path d="M9 6v1" stroke="#000" strokeWidth="1.500" /><rect x="11.500" y="1.500" width="3" height="5" rx="1.500" stroke="#000" /><path d="M3 14v1" stroke="#000" strokeWidth="1.500" /><rect x="5.500" y="9.500" width="3" height="5" rx="1.500" stroke="#000" /><rect x="11.500" y="9.500" width="3" height="5" rx="1.500" stroke="#000" /></XlIcon>
      <Sep />
      <XlIcon label="Fill colour"><path d="M4 6l5-4 5 5-6 5z" fill="#e0e8f4" stroke="#405878" /><path d="M13 5c3 1 3 4 2 6" stroke="#3878d8" strokeWidth="2" /><path d="M1 13h15v3H1z" fill="#ffff00" /></XlIcon>
      <Caret />
      <XlIcon label="Font colour"><path d="M4 11l4-9h1l4 9M5 8h7" stroke="#404878" strokeWidth="1.500" /><path d="M1 13h15v3H1z" fill="#e81010" /></XlIcon>
      <Caret />
      <span className="w-[14px] shrink-0" />
      <Overflow />
    </div>
  );
}

const excelMenus = [
  ['文件', 'F'], ['编辑', 'E'], ['视图', 'V'], ['插入', 'I'], ['格式', 'O'], ['工具', 'T'], ['数据', 'D'], ['窗口', 'W'], ['帮助', 'H'],
];

function ExcelLogo() {
  return (
    <svg className="shrink-0" width="16" height="16" viewBox="0 0 16 16">
      <rect x=".5" y=".5" width="15" height="15" rx="1" fill="#e8f4e4" stroke="#287038" />
      <rect x="3" y="3" width="10" height="10" fill="#fff" stroke="#58a058" />
      <path d="M4 4h3l1.500 2L10 4h2.500L10 8l3 4H9.500L8 9.500 6 12H3.500L7 8z" fill="#1c7030" />
    </svg>
  );
}

type Cell = { t?: React.ReactNode; span?: number; cls?: string };

const columns = [
  { id: 'A', w: 29 }, { id: 'B', w: 57 }, { id: 'C', w: 57 }, { id: 'D', w: 89 }, { id: 'E', w: 73 }, { id: 'F', w: 89 },
  { id: 'G', w: 65 }, { id: 'H', w: 33 }, { id: 'I', w: 37 }, { id: 'J', w: 37 }, { id: 'K', w: 37 }, { id: 'L', w: 37 },
  { id: 'M', w: 77 }, { id: 'N', w: 55 }, { id: 'O', w: 72 },
];
const selectedColumns = 'CDEFGH';

const impedance = [
  ['35', 'L1', 'L3', '单端', '3.937', '50+/-10%', '3.937', '86.367', '是', '9.875', '4.05', '', ''],
  ['36', 'L2', 'L1/L3', '单端', '3.937', '50+/-10%', '3.400', '49.572', '', '5.905', '3.95', '3.976', '4.15'],
  ['37', 'L5', 'L4/L6', '单端', '3.937', '50+/-10%', '3.937', '58.883', '', '27.95', '4.5', '4.998', '3.92'],
  ['38', 'L7', 'L6/L8', '单端', '3.937', '50+/-10%', '3.400', '49.492', '', '5.905', '3.95', '3.955', '4.15'],
  ['39', 'L7', 'L6/L8', '差分', '3.504/8.380', '100+/-10%', '3.200/8.684', '99.072', '', '5.905', '3.95', '3.955', '4.15'],
  ['40', 'L8', 'L6', '单端', '3.937', '50+/-10%', '3.937', '86.319', '是', '9.860', '4.05', '', ''],
];

const headings = ['控制', '屏蔽', '阻抗类型', '要求值', '客户要求值', '设计值', '阻抗计算值', '盖油', 'H1', 'Er1', 'H2', 'Er2'];

const Big = ({ children }: { children: React.ReactNode }) => <span className={`${CJK} pb-1 text-[16px]`}>{children}</span>;

const rows: { n: string; h?: string; cells: Cell[] }[] = [
  {
    n: '28',
    cells: [
      { t: 'BOT', span: 2, cls: 'border-b-2 border-black' },
      { t: '==================================', span: 4, cls: 'border-b-2 border-black bg-[#ff9900]' },
      { cls: 'border-b-2 border-black' },
      { t: '0.333+Plating', span: 5, cls: 'border-b-2 border-r-2 border-black' },
    ],
  },
  { n: '29', cells: [{ t: <><Big>完成板厚</Big>:1.57(+0.15/-0.15) MM</>, span: 6 }] },
  { n: '30', cells: [{ t: <><Big>设计板厚</Big>:1.526 MM</>, span: 6 }] },
  { n: '31', cells: [{ t: <><Big>板材类型</Big>:IT-180A</>, span: 6 }] },
  { n: '32', cells: [] },
  {
    n: '33',
    h: 'h-7',
    cells: [{ t: <span className="text-[20px] text-[#0000c8]">Impedance Information:</span>, span: 12, cls: 'border-b-2 border-black' }],
  },
  {
    n: '34',
    cells: headings.map((t, i) => ({
      t,
      cls: `text-[#0000d0] ${i === 5 || i === 6 ? 'bg-[#ff0000]' : 'bg-[#99cc00]'} ${i === 11 ? 'border-r-2 border-black' : ''}`,
    })),
  },
  ...impedance.map((r) => ({
    n: r[0],
    cells: r.slice(1).map((v, i) => ({
      t: i === 2 || i === 7 ? <Big>{v}</Big> : v,
      cls: `${r[0] === '40' ? 'border-b-2 border-black' : ''} ${i === 11 ? 'border-r-2 border-black' : ''} ${
        r[0] === '36' && i > 2 && i < 8 ? 'bg-[#a8b0c8]' : ''
      }`,
    })),
  })),
  { n: '41', cells: [] },
  { n: '42', cells: [] },
  {
    n: '43',
    cells: [
      { t: <Big>客户答复：</Big>, span: 2 },
      { t: <Big>接受建议</Big>, span: 3 },
      { t: <Big>不接受建议</Big>, span: 3 },
    ],
  },
];

// rows with a rule under them give up two pixels of their height to it
const cellHeight = (n: string) => (n === '33' ? 'h-[26px] pt-1' : n === '28' || n === '40' ? 'h-[17px] pt-px' : 'h-[19px] pt-[3px]');

function Sheet() {
  return (
    <div className="relative flex min-h-0 flex-1 overflow-hidden bg-white pl-px">
      <div className="min-w-0 flex-1">
        <table className={`${MONO} w-full table-fixed border-separate border-spacing-0 text-[13px] leading-[18px] text-black`}>
          <colgroup>
            <col style={{ width: 34 }} />
            {columns.map((c) => (
              <col key={c.id} style={{ width: c.w }} />
            ))}
            <col />
          </colgroup>
          <thead className={SERIF}>
            <tr className="h-5 text-[16px]">
              <th className="border-r border-b border-[#808080] bg-[#d4d0c8] p-0" />
              {columns.map((c) => (
                <th
                  key={c.id}
                  className={`border-r border-b p-0 font-normal ${
                    selectedColumns.includes(c.id) ? 'border-[#203878] bg-[#b4bcd4]' : 'border-[#808080] bg-[#d4d0c8]'
                  }`}
                >
                  {c.id}
                </th>
              ))}
              <th className="border-b border-[#808080] bg-[#d4d0c8] p-0" />
            </tr>
          </thead>
          <tbody>
            {rows.map((r) => (
              <tr key={r.n} className={r.h || 'h-[19px]'}>
                <th
                  className={`${SERIF} border-r border-b p-0 align-middle text-[16px] leading-[17px] font-normal ${
                    r.n === '36' ? 'border-[#203878] bg-[#b4bcd4]' : 'border-[#808080] bg-[#d4d0c8]'
                  }`}
                >
                  {r.n}
                </th>
                {r.cells.map((c, i) => (
                  <td key={i} colSpan={c.span} className={`p-0 pl-[2px] align-bottom whitespace-nowrap ${c.cls || ''}`}>
                    <div className={`flex items-center overflow-x-clip ${cellHeight(r.n)} ${r.n === '28' && i === 1 ? 'justify-center' : ''}`}>{c.t}</div>
                  </td>
                ))}
              </tr>
            ))}
          </tbody>
        </table>
      </div>
      <div className="flex w-4 shrink-0 flex-col bg-[#eae8e4]">
        <span className="h-[5px] border border-[#808080] bg-[#d4d0c8]" />
        <button aria-label="Scroll up" className="flex h-4 items-center justify-center border border-t-white border-l-white border-b-[#404040] border-r-[#404040] bg-[#d4d0c8]">
          <svg width="7" height="4" viewBox="0 0 7 4"><path d="M0 4h7L3.500 0z" fill="#000" /></svg>
        </button>
      </div>
      {/* active range */}
      <div className="absolute top-[180px] left-[119px] h-[22px] w-[409px] border-[3px] border-black">
        <span className="absolute -right-1 -bottom-1 size-[5px] bg-black" />
      </div>
      {/* marker frame drawn round the design value */}
      <div className="absolute top-[177px] left-[319px] h-[34px] w-[94px] border-4 border-[#00ff00] shadow-[2px_3px_4px_rgba(0,0,0,0.5)]" />
    </div>
  );
}

function ExcelWindow() {
  return (
    <section className="absolute top-[416px] right-[43px] bottom-0 left-[472px] flex flex-col border-x-2 border-t border-t-white border-l-white border-r-[#606060] bg-[#d4d0c8] px-[2px] pt-[2px]">
      <header className="flex h-[18px] shrink-0 items-center bg-linear-to-r from-[#0a246a] to-[#a6caf0] pr-[2px] pl-px">
        <ExcelLogo />
        <h2 className={`${SANS} flex-1 pl-px text-[12px] leading-4 font-bold whitespace-nowrap text-white`}>Microsoft Excel - 8e165099a0-叠层阻抗.xls</h2>
        <WinButton kind="min" />
        <WinButton kind="max" />
        <span className="w-[2px]" />
        <WinButton kind="close" />
      </header>
      <ExcelToolbar />
      <nav className={`${CJK} flex h-6 shrink-0 items-center bg-linear-to-r from-[#d6d3cc] to-[#f4f2ee] pl-[2px] text-[12px] leading-5 text-black`}>
        <Grip />
        <ExcelLogo />
        <div className="flex pl-2">
          {excelMenus.map(([name, key]) => (
            <button key={key} className="flex w-[58px] items-center gap-[3px]">
              {name}
              <span className={`${MONO} text-[10px]`}>(<u>{key}</u>)</span>
            </button>
          ))}
        </div>
        <div className="ml-auto flex h-5 w-[174px] items-center bg-white">
          <input aria-label="Help question" placeholder="键入需要帮助的问题" className="min-w-0 flex-1 px-[2px] placeholder:text-[#808080]" />
          <Caret />
        </div>
        <svg className="mr-[2px] ml-[6px]" width="48" height="11" viewBox="0 0 48 11" fill="none" stroke="#000">
          <path d="M1 9h6" strokeWidth="2" />
          <path d="M19.500 4V1.500h6v5H23M19 2h7M16.500 4.500h6v5h-6zM16 5h7" />
          <path d="M36 2l7 7M43 2l-7 7" strokeWidth="1.500" />
        </svg>
      </nav>
      <div className="flex h-5 shrink-0 items-center text-black">
        <input aria-label="Name box" defaultValue="C36" className={`${SERIF} ml-px h-[18px] w-[106px] bg-white text-center text-[16px]`} />
        <span className="pl-[3px]"><Caret /></span>
        <span className={`${SERIF} ml-[46px] w-5 text-center text-[13px] font-bold italic`}>fx</span>
        <input aria-label="Formula" defaultValue="单端" className={`${CJK} h-5 min-w-0 flex-1 bg-white pl-[11px] text-[16px]`} />
      </div>
      <div className="h-[2px] shrink-0 bg-[#808080]" />
      <Sheet />
    </section>
  );
}

function Notification() {
  return (
    <section className={`${CJK} absolute right-[2px] bottom-0 flex h-[123px] w-[213px] flex-col border-x-2 border-t border-[#c4d4e0] bg-[#eef4f8]`}>
      <header className="flex h-[22px] shrink-0 items-center gap-1 bg-linear-to-b from-[#eef3f7] via-[#b4c6d6] to-[#d0dce6] pl-1">
        <svg width="20" height="17" viewBox="0 0 20 17">
          <path d="M1 9l8-7 8 7" fill="none" stroke="#d83030" strokeWidth="2" />
          <path d="M4 8v6h5" fill="#fff" stroke="#c09050" />
          <path d="M12 16L6 10C5 6 10 4 12 8c2-4 7-2 6 2z" fill="#f07878" stroke="#902020" />
        </svg>
        <h2 className="text-[10px] leading-4 font-bold text-black">系统提示</h2>
      </header>
      <div className="mt-[2px] flex-1 border-t border-[#b0c4d4] bg-linear-to-b from-white via-[#e0edf8] to-[#a8cfe4] pt-[14px] text-[19px] leading-[34px] font-bold text-[#80502c]">
        <p className="pl-5">有系统消息</p>
        <p className="pr-5 text-right">请注意查收!</p>
      </div>
    </section>
  );
}

export default function App() {
  return (
    <div className="relative flex h-screen flex-col overflow-hidden bg-black">
      <TitleBar />
      <MenuBar />
      <div className="flex min-h-0 flex-1">
        <Sidebar />
        <BoardCanvas />
        <ToolStrip />
      </div>
      <StatusArea />
      <FilterPopup />
      <ExcelWindow />
      <Notification />
    </div>
  );
}
